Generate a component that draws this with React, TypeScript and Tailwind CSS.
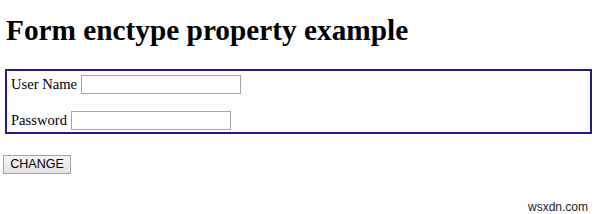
export default function App() {
  return (
    <div className="flex h-[214px] w-[600px] flex-col overflow-hidden bg-white font-['Liberation_Serif',serif] text-black">
      <h1 className="ml-[6px] mt-[13px] text-[29.3px] font-bold leading-[34px]">
        Form enctype property example
      </h1>

      <form className="ml-[5px] mt-[22px] flex h-[65px] w-[587px] flex-col gap-[17px] border-2 border-[#1e1e8c] pl-[4px] pt-[4px] text-[14.6px]">
        <label className="flex h-[19px] items-center">
          User Name
          <input
            className="ml-[4px] h-[19px] w-[160px] border border-[#a5a5a5] bg-white"
            type="text"
          />
        </label>
        <label className="flex h-[19px] items-center">
          Password
          <input
            className="ml-[4px] h-[19px] w-[160px] border border-[#a5a5a5] bg-white"
            type="password"
          />
        </label>
      </form>

      <div className="ml-[3px] mt-[21px]">
        <button
          className="flex h-[19px] w-[68px] items-center justify-center border border-[#a3a3a3] bg-gradient-to-b from-[#f6f6f6] to-[#e3e3e3] font-['Liberation_Sans',sans-serif] text-[12.5px] leading-none text-black"
          type="button"
        >
          CHANGE
        </button>
      </div>

      <div className="mt-[26px] flex justify-end pr-[12px] font-['Liberation_Sans',sans-serif] text-[12px] leading-[14px] text-[#222]">
        wsxdn.com
      </div>
    </div>
  );
}
